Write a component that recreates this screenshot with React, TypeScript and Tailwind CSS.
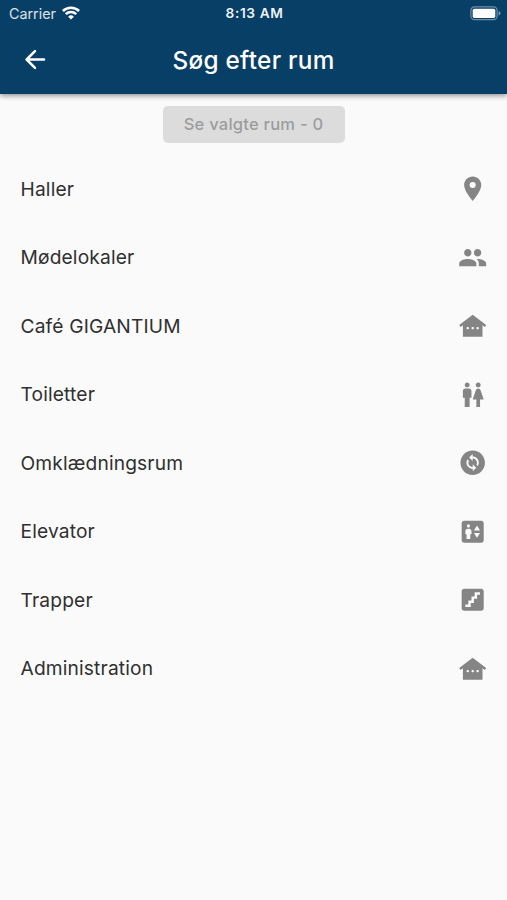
import React from "react";
import { IconType } from "react-icons";
import { MdLocationOn, MdPeople, MdOtherHouses, MdWc, MdChangeCircle, MdElevator, MdStairs } from "react-icons/md";

interface RoomCategory {
  name: string;
  icon: IconType;
}

const categories: RoomCategory[] = [
  { name: "Haller", icon: MdLocationOn },
  { name: "Mødelokaler", icon: MdPeople },
  { name: "Café GIGANTIUM", icon: MdOtherHouses },
  { name: "Toiletter", icon: MdWc },
  { name: "Omklædningsrum", icon: MdChangeCircle },
  { name: "Elevator", icon: MdElevator },
  { name: "Trapper", icon: MdStairs },
  { name: "Administration", icon: MdOtherHouses },
];

function WifiIcon() {
  return (
    <svg className="w-[18px] h-[14px]" viewBox="0 0 18 14" fill="none" stroke="currentColor" strokeWidth="2.5">
      <path d="M0.9 5a11.5 11.5 0 0 1 16.2 0" />
      <path d="M3.8 8.2a7.4 7.4 0 0 1 10.4 0" />
      <path d="M9 13.6L6.1 10.7a4.1 4.1 0 0 1 5.8 0z" fill="currentColor" stroke="none" />
    </svg>
  );
}

function BatteryIcon() {
  return (
    <svg className="w-[31px] h-[15px]" viewBox="0 0 31 15" fill="none">
      <rect x="0.9" y="0.9" width="26.2" height="12.8" rx="3.6" stroke="#fff" strokeOpacity="0.42" strokeWidth="1.2" />
      <rect x="2.7" y="2.7" width="22.6" height="9.2" rx="1.6" fill="#fff" />
      <path d="M28.6 5.2c1.3.4 1.9 1.2 1.9 2.1s-.6 1.7-1.9 2.1z" fill="#fff" fillOpacity="0.5" />
    </svg>
  );
}

function StatusBar() {
  return (
    <div className="grid grid-cols-3 h-[27px] items-center pl-[9px] pr-[6px]">
      <div className="flex items-center gap-[6px]">
        <span className="pt-px text-[14.3px] leading-none text-white/85">Carrier</span>
        <WifiIcon />
      </div>
      <span className="pt-px pr-px text-center text-[13.7px] leading-none font-semibold tracking-[0.6px] text-white/95">8:13 AM</span>
      <div className="flex justify-end">
        <BatteryIcon />
      </div>
    </div>
  );
}

export default function App() {
  return (
    <div className="flex flex-col w-[507px] h-[900px] overflow-hidden bg-[#fafafa] font-['Inter',sans-serif]">
      <header className="relative shrink-0 h-[94px] bg-[#083f66] text-white shadow-[0_2px_5px_rgba(0,0,0,0.4)]">
        <StatusBar />
        <div className="grid grid-cols-[70px_1fr_70px] h-[66px] items-center">
          <button className="flex items-center justify-center" aria-label="Tilbage">
            <svg className="w-[22px] h-[22px]" viewBox="0 0 22 22" fill="none" stroke="currentColor" strokeWidth="2.5" strokeLinecap="round" strokeLinejoin="round">
              <path d="M20 10.5H3M11 2.2L2.6 10.5l8.4 8.3" />
            </svg>
          </button>
          <h1 className="text-center text-[24.3px] leading-none font-medium tracking-[0.3px]">Søg efter rum</h1>
        </div>
      </header>

      <main className="flex flex-col">
        <button className="self-center mt-[12px] w-[182px] h-[36.5px] rounded-[5px] bg-[#dcdcdc] text-[16.5px] font-medium tracking-[0.25px] text-[#9c9c9c]">
          Se valgte rum - 0
        </button>
        <ul className="mt-[12px]">
          {categories.map(({ name, icon: Icon }) => (
            <li key={name} className="flex items-center justify-between h-[68.5px] pl-[20.5px] pr-[20px] text-[19.2px] tracking-[0.15px] text-[#303030]">
              <span className="pt-px">{name}</span>
              <Icon className="w-[29.4px] h-[29.4px] text-[#858585]" />
            </li>
          ))}
        </ul>
      </main>
    </div>
  );
}
